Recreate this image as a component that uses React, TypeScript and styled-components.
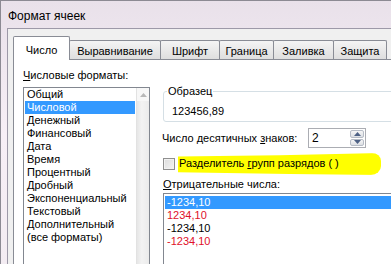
import React from 'react';
import styled, { createGlobalStyle } from 'styled-components';

const GlobalStyle = createGlobalStyle`
  html, body {
    margin: 0;
    padding: 0;
    background: #fff;
  }
  body {
    font-family: "Liberation Sans", Arial, sans-serif;
    font-size: 11px;
    color: #000;
  }
  * { box-sizing: border-box; }
`;

const Screen = styled.div`
  width: 391px;
  height: 264px;
  overflow: hidden;
`;

const Frame = styled.div`
  width: 440px;
  height: 300px;
  display: flex;
  flex-direction: column;
  padding-left: 6px;
  border-top: 1px solid #8c8a93;
  border-left: 1px solid #8c8a93;
  background: linear-gradient(180deg, #e9e1ea 0%, #f7eff6 45%, #f2ebf1 100%);
`;

const TitleBar = styled.div`
  height: 27px;
  padding: 3px 0 0 1px;
  line-height: 24px;
  font-size: 12px;
  color: #000;
`;

const Body = styled.div`
  flex: 1;
  background: #f0f0f0;
  border-top: 1px solid #9d99a8;
  border-left: 1px solid #9d99a8;
  padding: 7px 0 0 5px;
`;

const TabStrip = styled.div`
  display: flex;
  align-items: flex-end;
  height: 23px;
  position: relative;
  z-index: 1;
`;

const Tab = styled.div<{ $active?: boolean; $w: number }>`
  width: ${(p) => p.$w}px;
  height: ${(p) => (p.$active ? 24 : 19)}px;
  margin-bottom: ${(p) => (p.$active ? -1 : 0)}px;
  margin-right: -1px;
  display: flex;
  align-items: center;
  justify-content: center;
  padding-top: ${(p) => (p.$active ? 2 : 1)}px;
  border: 1px solid #898c95;
  border-bottom: none;
  border-radius: 2px 2px 0 0;
  background: ${(p) =>
    p.$active ? '#fff' : 'linear-gradient(180deg, #f4f4f4 0%, #e9e9e9 50%, #dedede 100%)'};
  position: relative;
  z-index: ${(p) => (p.$active ? 2 : 1)};
`;

const Panel = styled.div`
  width: 430px;
  height: 230px;
  background: #fff;
  border: 1px solid #898c95;
  padding: 9px 0 0 9px;
  display: flex;
  gap: 13px;
`;

const LeftCol = styled.div`
  width: 127px;
  display: flex;
  flex-direction: column;
`;

const Caption = styled.div`
  line-height: 13px;
  white-space: nowrap;
  u { text-decoration: underline; text-underline-offset: 1px; }
`;

const FormatList = styled.div`
  margin-top: 5px;
  height: 200px;
  display: flex;
  border: 1px solid #828790;
`;

const ListItems = styled.div`
  flex: 1;
  padding: 0 1px;
`;

const Item = styled.div<{ $selected?: boolean; $color?: string }>`
  height: 13px;
  line-height: 13px;
  padding-left: 2px;
  white-space: nowrap;
  background: ${(p) => (p.$selected ? '#3399ff' : 'transparent')};
  color: ${(p) => (p.$selected ? '#fff' : p.$color || '#000')};
`;

const ScrollBar = styled.div`
  width: 13px;
  display: flex;
  flex-direction: column;
  background: linear-gradient(90deg, #e6e6e6, #f3f3f3 40%, #ebebeb);
  border-left: 1px solid #e2e2e2;
`;

const ScrollButton = styled.div`
  height: 13px;
  display: flex;
  align-items: center;
  justify-content: center;
  background: #f7f7f7;
`;

const RightCol = styled.div`
  width: 260px;
  display: flex;
  flex-direction: column;
`;

const SampleBox = styled.fieldset`
  margin: 16px 0 0 0;
  min-width: 0;
  padding: 0 0 3px 3px;
  border: 1px solid #d5dfe5;
  border-radius: 3px;
`;

const SampleLegend = styled.legend`
  padding: 0 1px;
  line-height: 13px;
`;

const SampleValue = styled.div`
  margin-top: 7px;
  padding-left: 5px;
  line-height: 13px;
`;

const DecimalRow = styled.div`
  margin-top: 6px;
  height: 20px;
  display: flex;
  align-items: center;
`;

const DecimalLabel = styled(Caption)`
  width: 146px;
  margin-left: -1px;
`;

const SpinBox = styled.div`
  width: 58px;
  height: 20px;
  display: flex;
  border: 1px solid #abadb3;
  background: #fff;
`;

const SpinValue = styled.div`
  flex: 1;
  padding-left: 3px;
  font-size: 12px;
  line-height: 18px;
`;

const SpinButtons = styled.div`
  width: 16px;
  display: flex;
  flex-direction: column;
  gap: 1px;
  padding: 1px;
`;

const SpinButton = styled.div`
  flex: 1;
  display: flex;
  align-items: center;
  justify-content: center;
  border: 1px solid #b6bcc6;
  border-radius: 2px;
  background: linear-gradient(180deg, #f6f6f6, #dcdfe4);
`;

const CheckRow = styled.div`
  margin-top: 5px;
  height: 22px;
  display: flex;
  align-items: center;
`;

const CheckBox = styled.div`
  width: 12px;
  height: 12px;
  border: 1px solid #8f8f8f;
  background: linear-gradient(135deg, #dcdcdc, #f4f4f4);
  box-shadow: inset 0 0 0 1px #f2f2f2;
`;

const Marked = styled.div`
  width: 203px;
  height: 22px;
  margin-left: 3px;
  padding: 2px 0 0 1px;
  line-height: 17px;
  white-space: nowrap;
  background: #ffff00;
  border-radius: 3px 9px 10px 2px / 3px 8px 9px 2px;
  clip-path: polygon(0 16%, 50% 10%, 100% 0, 100% 100%, 55% 95%, 0 88%);
  u { text-decoration: underline; text-underline-offset: 1px; }
`;

const NegCaption = styled(Caption)`
  margin-top: 3px;
`;

const NegList = styled.div`
  margin-top: 2px;
  height: 100px;
  border: 1px solid #828790;
  padding: 2px 1px 0 1px;
`;

const Arrow = ({ up, color = '#555' }: { up?: boolean; color?: string }) => (
  <svg width="7" height="4" viewBox="0 0 7 4">
    <path d={up ? 'M0 4 L3.5 0 L7 4 Z' : 'M0 0 L3.5 4 L7 0 Z'} fill={color} />
  </svg>
);

const tabs = [
  { label: 'Число', w: 57, active: true },
  { label: 'Выравнивание', w: 92 },
  { label: 'Шрифт', w: 60 },
  { label: 'Граница', w: 55 },
  { label: 'Заливка', w: 61 },
  { label: 'Защита', w: 54 },
];

const formats = [
  'Общий',
  'Числовой',
  'Денежный',
  'Финансовый',
  'Дата',
  'Время',
  'Процентный',
  'Дробный',
  'Экспоненциальный',
  'Текстовый',
  'Дополнительный',
  '(все форматы)',
];

const negatives = [
  { text: '-1234,10', color: '#000' },
  { text: '1234,10', color: '#e0102a' },
  { text: '-1234,10', color: '#000' },
  { text: '-1234,10', color: '#e0102a' },
];

export default function App() {
  return (
    <Screen>
      <GlobalStyle />
      <Frame>
        <TitleBar>Формат ячеек</TitleBar>
        <Body>
          <TabStrip>
            {tabs.map((t) => (
              <Tab key={t.label} $active={t.active} $w={t.w}>
                {t.label}
              </Tab>
            ))}
          </TabStrip>
          <Panel>
            <LeftCol>
              <Caption>
                <u>Ч</u>исловые форматы:
              </Caption>
              <FormatList>
                <ListItems>
                  {formats.map((f, i) => (
                    <Item key={f} $selected={i === 1}>
                      {f}
                    </Item>
                  ))}
                </ListItems>
                <ScrollBar>
                  <ScrollButton>
                    <Arrow up color="#b8b8b8" />
                  </ScrollButton>
                </ScrollBar>
              </FormatList>
            </LeftCol>
            <RightCol>
              <SampleBox>
                <SampleLegend>Образец</SampleLegend>
                <SampleValue>123456,89</SampleValue>
              </SampleBox>
              <DecimalRow>
                <DecimalLabel>
                  Число десятичных <u>з</u>наков:
                </DecimalLabel>
                <SpinBox>
                  <SpinValue>2</SpinValue>
                  <SpinButtons>
                    <SpinButton>
                      <Arrow up color="#4d6185" />
                    </SpinButton>
                    <SpinButton>
                      <Arrow color="#4d6185" />
                    </SpinButton>
                  </SpinButtons>
                </SpinBox>
              </DecimalRow>
              <CheckRow>
                <CheckBox />
                <Marked>
                  Разделитель <u>г</u>рупп разрядов ( )
                </Marked>
              </CheckRow>
              <NegCaption>
                <u>О</u>трицательные числа:
              </NegCaption>
              <NegList>
                {negatives.map((n, i) => (
                  <Item key={i} $selected={i === 0} $color={n.color}>
                    {n.text}
                  </Item>
                ))}
              </NegList>
            </RightCol>
          </Panel>
        </Body>
      </Frame>
    </Screen>
  );
}
